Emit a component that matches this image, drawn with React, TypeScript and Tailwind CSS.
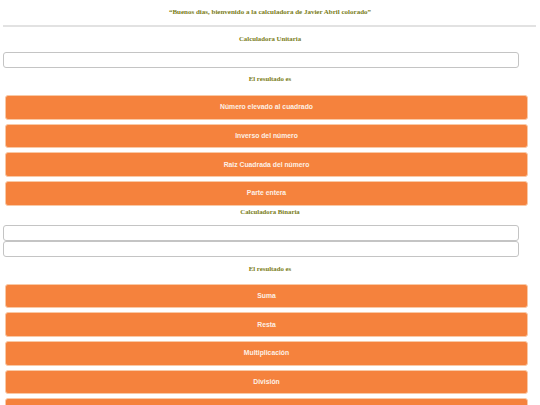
import React from "react";

const serif = { fontFamily: '"Liberation Serif", "Times New Roman", serif' };
const sans = { fontFamily: '"Liberation Sans", Arial, sans-serif' };

function Btn({ label }: { label: string }) {
  return (
    <button
      className="h-[24.67px] w-full rounded-[3px] border border-[#f9c9a6] bg-[#f5823d] text-[6.8px] font-bold text-[#fdf0e6]"
      style={sans}
    >
      {label}
    </button>
  );
}

export default function App() {
  return (
    <div className="w-[540px] h-[405px] overflow-hidden bg-white">
      <div className="flex h-[25px] items-center justify-center text-[7px] font-bold text-[#7a7d18]" style={serif}>
        “Buenos dias, bienvenido a la calculadora de Javier Abril colorado”
      </div>
      <div className="mx-[3px] h-[2px] w-[533px] bg-[#e2e2e2]" />
      <div className="px-[3px]">
        <div className="flex h-[25px] items-center justify-center text-[6.8px] font-bold text-[#7a7d18]" style={serif}>
          Calculadora Unitaria
        </div>
        <div className="h-[16px] w-[516px] rounded-[3px] border border-[#c4c4c4] bg-white" />
        <div className="flex h-[22px] items-center justify-center text-[6.8px] font-bold text-[#7a7d18]" style={serif}>
          El resultado es
        </div>
        <div className="mt-[5px] flex w-[525px] flex-col gap-[4px] pl-[2px]">
          <Btn label="Número elevado al cuadrado" />
          <Btn label="Inverso del número" />
          <Btn label="Raiz Cuadrada del número" />
          <Btn label="Parte entera" />
        </div>
        <div className="flex h-[13px] items-center justify-center text-[6.8px] font-bold text-[#7a7d18]" style={serif}>
          Calculadora Binaria
        </div>
        <div className="mt-[6px] h-[16px] w-[516px] rounded-[3px] border border-[#c4c4c4] bg-white" />
        <div className="h-[16px] w-[516px] rounded-[3px] border border-[#c4c4c4] bg-white" />
        <div className="flex h-[24px] items-center justify-center text-[6.8px] font-bold text-[#7a7d18]" style={serif}>
          El resultado es
        </div>
        <div className="mt-[3px] flex w-[525px] flex-col gap-[4px] pl-[2px]">
          <Btn label="Suma" />
          <Btn label="Resta" />
          <Btn label="Multiplicación" />
          <Btn label="División" />
          <Btn label="" />
        </div>
      </div>
    </div>
  );
}
